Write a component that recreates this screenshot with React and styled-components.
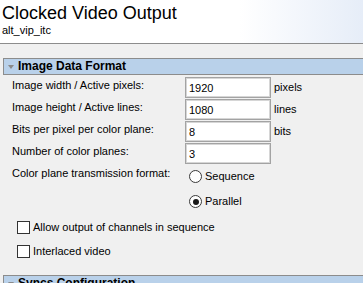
import React from "react";
import styled, { createGlobalStyle } from "styled-components";

const GlobalStyle = createGlobalStyle`
  html, body {
    margin: 0;
    padding: 0;
    background: #f0f0f0;
    overflow: hidden;
  }
  body {
    font-family: "Liberation Sans", Arial, sans-serif;
    font-size: 11px;
    color: #000;
  }
`;

const Page = styled.div`
  width: 363px;
  height: 283px;
  overflow: hidden;
`;

const Header = styled.header`
  height: 40px;
  padding: 3px 0 0 2px;
  background: linear-gradient(to right, #fff 0%, #fff 66%, #e6edf8 100%);
  border-bottom: 1px solid #8c8c8c;
`;

const Title = styled.h1`
  margin: 0;
  font-size: 18px;
  line-height: 20px;
  font-weight: normal;
`;

const Subtitle = styled.div`
  margin-top: 1px;
  font-size: 11px;
  line-height: 13px;
`;

const Strip = styled.div`
  height: 14px;
`;

const SectionHeader = styled.div`
  display: flex;
  align-items: center;
  gap: 4px;
  height: 15px;
  margin-left: 3px;
  margin-top: ${(p) => p.$top || 0}px;
  padding-left: 4px;
  background: #b9d1ea;
  border: 1px solid #8c8c8c;
  border-right: none;
  font-size: 12px;
  font-weight: bold;
  line-height: 15px;
`;

const Caret = styled.span`
  width: 0;
  height: 0;
  border-left: 3px solid transparent;
  border-right: 3px solid transparent;
  border-top: 4px solid #8a8a8a;
`;

const Form = styled.div`
  padding: 2px 0 0 12px;
`;

const FieldRow = styled.div`
  display: flex;
  align-items: flex-start;
  height: 22px;
`;

const Label = styled.div`
  width: 173px;
  padding-top: ${(p) => p.$top ?? 2}px;
  line-height: 13px;
`;

const TextBox = styled.input`
  box-sizing: border-box;
  width: 86px;
  height: 21px;
  margin: 0;
  padding: 0 3px;
  border: 1px solid #a3a3a3;
  box-shadow: inset 0 0 0 1px #d6d6d6;
  background: #fff;
  font-family: inherit;
  font-size: 11px;
  line-height: 13px;
  color: #000;
  outline: none;
`;

const Unit = styled.span`
  margin-left: 3px;
  padding-top: 4px;
  line-height: 13px;
`;

const ChoiceRow = styled.div`
  display: flex;
  align-items: flex-start;
  margin-top: -1px;
`;

const RadioGroup = styled.div`
  display: flex;
  flex-direction: column;
  padding-left: 4px;
`;

const Option = styled.label`
  display: flex;
  align-items: center;
  gap: 3px;
  height: ${(p) => p.$h || 25}px;
  line-height: 13px;
`;

const RadioDot = styled.span`
  box-sizing: border-box;
  width: 13px;
  height: 13px;
  border: 1px solid #3a3a3a;
  border-radius: 50%;
  background: #fff;
  display: flex;
  align-items: center;
  justify-content: center;
  &::after {
    content: "";
    width: 6px;
    height: 6px;
    border-radius: 50%;
    background: ${(p) => (p.$checked ? "#1a1a1a" : "transparent")};
  }
`;

const CheckGroup = styled.div`
  display: flex;
  flex-direction: column;
  margin-top: 1px;
  padding-left: 5px;
`;

const CheckBox = styled.span`
  box-sizing: border-box;
  width: 13px;
  height: 13px;
  border: 1px solid #333;
  background: #fff;
`;

const fields = [
  { label: "Image width / Active pixels:", value: "1920", unit: "pixels" },
  { label: "Image height / Active lines:", value: "1080", unit: "lines" },
  { label: "Bits per pixel per color plane:", value: "8", unit: "bits" },
  { label: "Number of color planes:", value: "3" },
];

export default function App() {
  return (
    <Page>
      <GlobalStyle />
      <Header>
        <Title>Clocked Video Output</Title>
        <Subtitle>alt_vip_itc</Subtitle>
      </Header>
      <Strip />
      <SectionHeader>
        <Caret />
        Image Data Format
      </SectionHeader>
      <Form>
        {fields.map((f) => (
          <FieldRow key={f.label}>
            <Label>{f.label}</Label>
            <TextBox readOnly value={f.value} />
            {f.unit && <Unit>{f.unit}</Unit>}
          </FieldRow>
        ))}
        <ChoiceRow>
          <Label $top={3}>Color plane transmission format:</Label>
          <RadioGroup>
            <Option>
              <RadioDot />
              Sequence
            </Option>
            <Option>
              <RadioDot $checked />
              Parallel
            </Option>
          </RadioGroup>
        </ChoiceRow>
        <CheckGroup>
          <Option $h={24}>
            <CheckBox />
            Allow output of channels in sequence
          </Option>
          <Option $h={24}>
            <CheckBox />
            Interlaced video
          </Option>
        </CheckGroup>
      </Form>
      <SectionHeader $top={12}>
        <Caret />
        Syncs Configuration
      </SectionHeader>
    </Page>
  );
}
